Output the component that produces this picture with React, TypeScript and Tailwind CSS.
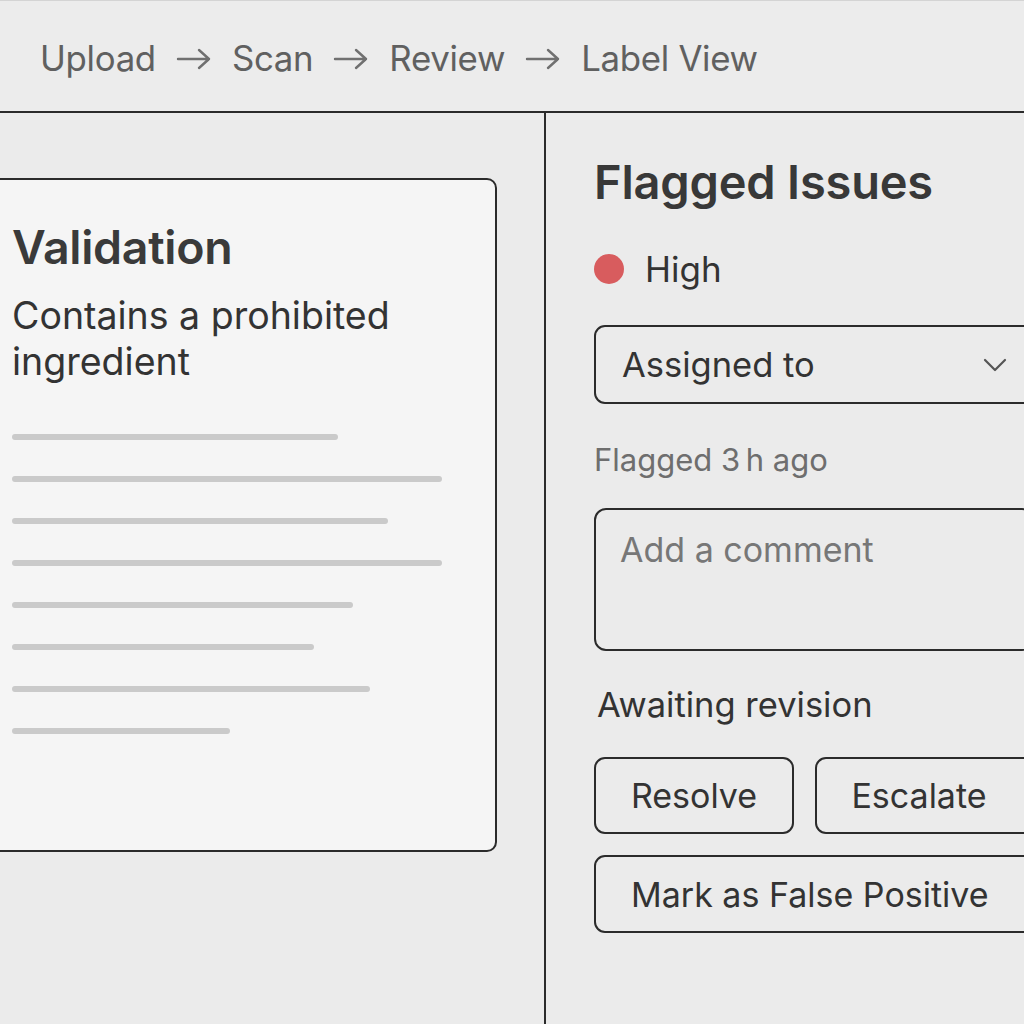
import React from "react";

const lines = [326, 430, 376, 430, 341, 302, 358, 218];

export default function App() {
  return (
    <div
      className="w-[1024px] h-[1024px] overflow-hidden bg-[#ebebeb] text-[#333] flex flex-col"
      style={{ fontFamily: "Inter, 'Noto Sans', sans-serif" }}
    >
      <header className="h-[113px] shrink-0 border-t border-t-[#d4d4d4] border-b-2 border-b-[#2b2b2b] bg-[#ececec] flex items-center pl-[40px] pt-[4px] text-[34.8px] text-[#606060] tracking-[-0.3px]">
        <span>Upload</span>
        <Arrow />
        <span>Scan</span>
        <Arrow />
        <span>Review</span>
        <Arrow />
        <span>Label View</span>
      </header>
      <main className="flex flex-1 min-h-0">
        <section className="w-[546px] shrink-0 border-r-2 border-r-[#2b2b2b] pt-[65px]">
          <div className="ml-[-20px] w-[517px] h-[674px] rounded-[10px] border-2 border-[#2b2b2b] bg-[#f5f5f5] pl-[30px] pt-[38px]">
            <h2 className="text-[46.5px] font-semibold leading-[58px] text-[#3a3a3a] tracking-[-0.3px]">Validation</h2>
            <p className="mt-[17px] text-[37.5px] leading-[46px] text-[#333] w-[440px]">
              Contains a prohibited ingredient
            </p>
            <div className="mt-[49px] flex flex-col gap-[36px]">
              {lines.map((w, i) => (
                <div key={i} className="h-[6px] rounded-full bg-[#cacaca]" style={{ width: w }} />
              ))}
            </div>
          </div>
        </section>
        <section className="flex-1 min-w-0 pl-[48px] pt-[39px] flex flex-col">
          <h1 className="text-[47px] font-semibold leading-[60px] text-[#383838] tracking-[-0.2px] whitespace-nowrap">Flagged Issues</h1>
          <div className="mt-[37px] flex items-center gap-[21px]">
            <span className="w-[30px] h-[30px] rounded-full bg-[#d85c5e]" />
            <span className="text-[35px] leading-[40px]">High</span>
          </div>
          <div className="mt-[36px] w-[440px] h-[79px] shrink-0 rounded-[11px] border-2 border-[#2b2b2b] flex items-center justify-between pl-[26px] pr-[24px] text-[34.5px]">
            <span>Assigned to</span>
            <svg width="26" height="16" viewBox="0 0 26 16" fill="none" stroke="#555" strokeWidth="2.2" strokeLinecap="round" strokeLinejoin="round">
              <path d="M3 3 L13 13 L23 3" />
            </svg>
          </div>
          <div className="mt-[36px] text-[31px] leading-[40px] text-[#6e6e6e] whitespace-nowrap">Flagged 3{"\u2009"}h ago</div>
          <div className="mt-[28px] w-[440px] h-[143px] shrink-0 rounded-[12px] border-2 border-[#2b2b2b] pl-[24px] pt-[16px] text-[34px] leading-[48px] text-[#777]">
            Add a comment
          </div>
          <div className="mt-[30px] pl-[3px] text-[34.5px] leading-[48px] text-[#333] whitespace-nowrap">Awaiting revision</div>
          <div className="mt-[28px] flex gap-[21px]">
            <button className="w-[200px] shrink-0 h-[77px] rounded-[11px] border-2 border-[#2b2b2b] text-[34px] text-[#333]">Resolve</button>
            <button className="w-[220px] h-[77px] shrink-0 rounded-[11px] border-2 border-[#2b2b2b] text-[34px] text-[#333] pr-[12px]">Escalate</button>
          </div>
          <div className="mt-[21px] flex">
            <button className="w-[440px] shrink-0 h-[78px] rounded-[11px] border-2 border-[#2b2b2b] text-[34px] text-[#333] text-left pl-[35px] whitespace-nowrap">
              Mark as False Positive
            </button>
          </div>
        </section>
      </main>
    </div>
  );
}

function Arrow() {
  return (
    <svg width="38" height="24" viewBox="0 0 38 24" fill="none" stroke="#707070" strokeWidth="2.4" strokeLinecap="round" strokeLinejoin="round" className="mx-[19px] mt-[2px]">
      <path d="M3 12 H34 M24 3 L34 12 L24 21" />
    </svg>
  );
}
